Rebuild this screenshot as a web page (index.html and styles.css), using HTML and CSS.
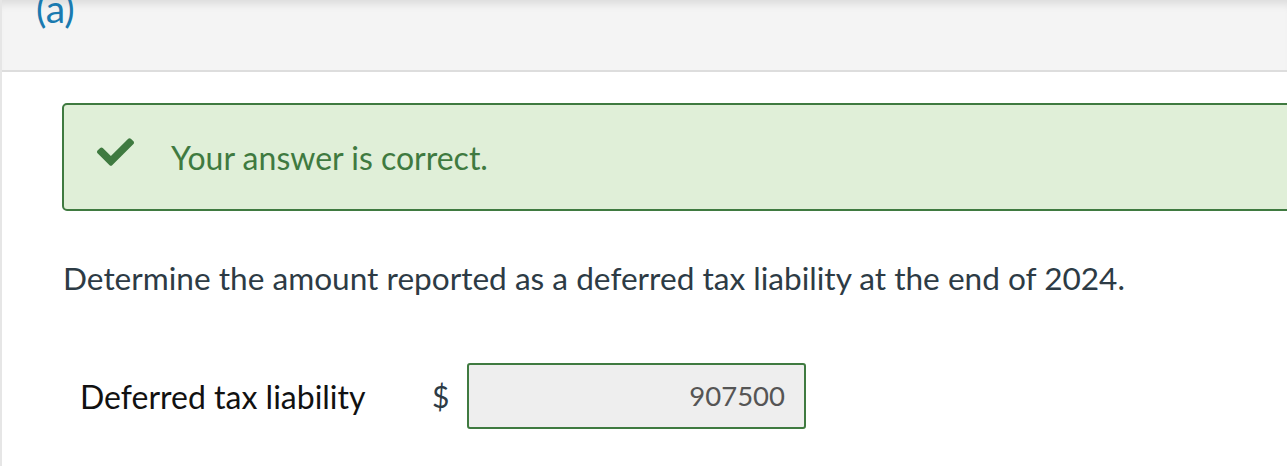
FILE: index.html
```html
<!DOCTYPE html>
<html lang="en">

<head>
    <meta charset="UTF-8">
    <meta name="viewport" content="width=device-width, initial-scale=1.0">
    <title>Question</title>
    <link rel="stylesheet" href="styles.css">
</head>

<body>
    <div class="page-wrapper">
        <div class="part-header">
            <span class="part-label">(a)</span>
        </div>
        <div class="part-body">
            <div class="feedback correct">
                <svg class="check-icon" viewBox="0 64 512 384" width="37" height="28">
                    <path fill="#3f7a40" d="M173.9 439.4l-166.4-166.4c-10-10-10-26.2 0-36.2l36.2-36.2c10-10 26.2-10 36.2 0L192 312.7 432.1 72.6c10-10 26.2-10 36.2 0l36.2 36.2c10 10 10 26.2 0 36.2L210.1 439.4c-10 10-26.2 10-36.2 0z" />
                </svg>
                <span class="feedback-text">Your answer is correct.</span>
            </div>
            <p class="question">Determine the amount reported as a deferred tax liability at the end of 2024.</p>
            <div class="answer-row">
                <span class="answer-label">Deferred tax liability</span>
                <span class="currency">$</span>
                <div class="answer-input">907500</div>
            </div>
        </div>
    </div>
</body>

</html>
```

FILE: styles.css
```css
html,
body {
    margin: 0;
    font-family: Lato, "Open Sans", sans-serif;
    background: #ffffff;
    overflow: hidden;
}

.page-wrapper {
    width: 1287px;
    height: 466px;
    border-left: 2px solid #e6e6e6;
    box-sizing: border-box;
    overflow: hidden;
}

.part-header {
    display: flow-root;
    height: 70px;
    background: #f4f4f4;
    border-bottom: 2px solid #dddddd;
    box-shadow: inset 0 10px 8px -6px rgba(0, 0, 0, 0.1);
    padding-left: 34px;
    overflow: hidden;
}

.part-label {
    display: block;
    color: #1a7ab0;
    font-size: 39px;
    line-height: 39px;
    margin-top: -11px;
}

.part-body {
    padding: 31px 0 0 60px;
}

.feedback {
    display: flex;
    align-items: center;
    height: 104px;
    margin-right: -20px;
    border: 2px solid #3f7a40;
    border-radius: 5px;
    background: #e0efd8;
}

.check-icon {
    margin-left: 33px;
    margin-right: 37px;
    margin-bottom: 11px;
}

.feedback-text {
    color: #3f7a40;
    font-size: 32px;
}

.question {
    margin: 48px 0 0 1px;
    color: #2d3b45;
    font-size: 31.6px;
    line-height: 38px;
}

.answer-row {
    display: flex;
    align-items: center;
    margin-top: 66px;
    padding-left: 18px;
}

.answer-label {
    color: #111111;
    font-size: 32px;
    width: 352px;
}

.currency {
    color: #2d3b45;
    font-size: 30px;
    width: 35px;
}

.answer-input {
    width: 316px;
    height: 62px;
    line-height: 62px;
    padding-right: 19px;
    text-align: right;
    border: 2px solid #3f7a40;
    border-radius: 3px;
    background: #eeeeee;
    color: #555555;
    font-size: 27.5px;
}
```
